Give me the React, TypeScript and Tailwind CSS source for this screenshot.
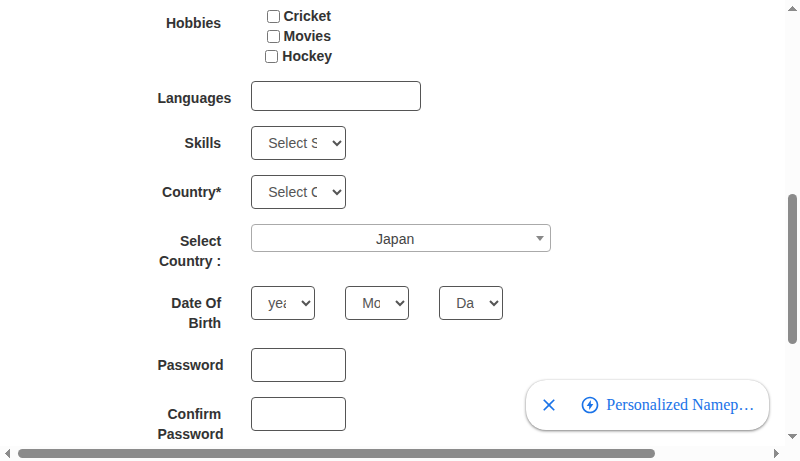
import React from "react";

const control = "h-[34px] rounded-[4px] border border-[#555] bg-white text-[14px] text-[#555]";

function Row({ label, children }: { label: string; children: React.ReactNode }) {
  return (
    <div className="mb-[15px] flex items-start">
      <label className="w-[63.75px] pt-[7px] text-right font-bold">{label}</label>
      <div className="ml-[30px] flex gap-[30px]">{children}</div>
    </div>
  );
}

function Select({ text, width }: { text: string; width: string }) {
  return (
    <select className={`${control} ${width} px-[12px] py-[6px]`} defaultValue={text}>
      <option>{text}</option>
    </select>
  );
}

function Hobby({ name }: { name: string }) {
  return (
    <label className="block h-[20px] whitespace-nowrap font-bold">
      <input type="checkbox" className="m-0 h-[13px] w-[13px] align-[-2px]" /> {name}
    </label>
  );
}

export default function App() {
  return (
    <div className="relative grid h-[461px] w-[800px] grid-cols-[785px_15px] grid-rows-[446px_15px] overflow-hidden bg-white font-['Liberation_Sans',Arial,sans-serif] text-[14px] leading-[20px] text-[#333]">
      <main className="overflow-hidden pl-[157.4px] pt-[6px]">
        <Row label="Hobbies">
          <div className="w-[95.25px] text-center">
            <Hobby name="Cricket" />
            <Hobby name="Movies" />
            <Hobby name="Hockey" />
          </div>
        </Row>
        <Row label="Languages">
          <div className="h-[30px] w-[170px] rounded-[4px] border border-[#555]" />
        </Row>
        <Row label="Skills">
          <Select text="Select Skills" width="w-[95px]" />
        </Row>
        <Row label="Country*">
          <Select text="Select Country" width="w-[95px]" />
        </Row>
        <Row label="Select Country :">
          <div className="flex h-[28px] w-[300px] items-center rounded-[4px] border border-[#aaa] pl-[8px] pr-[6px] text-[#444]">
            <span className="flex-1 pr-[6px] pt-px text-center">Japan</span>
            <span className="h-0 w-0 border-x-4 border-t-[5px] border-x-transparent border-t-[#888]" />
          </div>
        </Row>
        <Row label="Date Of Birth">
          <Select text="year" width="w-[64px]" />
          <Select text="Month" width="w-[64px]" />
          <Select text="Day" width="w-[64px]" />
        </Row>
        <Row label="Password">
          <input type="password" className={`${control} w-[95px] px-[12px]`} />
        </Row>
        <Row label="Confirm Password">
          <input type="password" className={`${control} w-[95px] px-[12px]`} />
        </Row>
      </main>

      <div className="flex flex-col items-center bg-[#fcfcfc]">
        <svg className="mt-[6px] h-[5px] w-[9px]" viewBox="0 0 9 5" fill="#8b8b8b" shapeRendering="crispEdges">
          <path d="M4.5 0 9 5H0z" />
        </svg>
        <div className="mt-[183px] h-[150px] w-[9px] rounded-full bg-[#8b8b8b]" />
        <svg className="mt-[90px] h-[5px] w-[9px]" viewBox="0 0 9 5" fill="#8b8b8b" shapeRendering="crispEdges">
          <path d="M0 0H9L4.5 5z" />
        </svg>
      </div>
      <div className="flex items-center bg-[#fcfcfc]">
        <svg className="ml-[5px] h-[9px] w-[5px]" viewBox="0 0 5 9" fill="#8b8b8b" shapeRendering="crispEdges">
          <path d="M5 0V9L0 4.5z" />
        </svg>
        <div className="ml-[8px] h-[9px] w-[637px] rounded-full bg-[#8b8b8b]" />
        <svg className="ml-[119px] h-[9px] w-[5px]" viewBox="0 0 5 9" fill="#8b8b8b" shapeRendering="crispEdges">
          <path d="M0 0V9L5 4.5z" />
        </svg>
      </div>
      <div className="bg-[#fcfcfc]" />

      <div className="absolute left-[526px] top-[380px] flex h-[50px] w-[243px] items-center rounded-[20px] bg-white text-[#1a73e8] shadow-[0_1px_3px_rgba(0,0,0,0.5),0_0_1px_rgba(0,0,0,0.15)]">
        <svg className="ml-[13px] h-[20px] w-[20px]" viewBox="0 0 24 24" fill="currentColor">
          <path d="M19 6.41 17.59 5 12 10.59 6.41 5 5 6.41 10.59 12 5 17.59 6.41 19 12 13.41 17.59 19 19 17.59 13.41 12z" />
        </svg>
        <svg className="ml-[21px] h-[20px] w-[20px]" viewBox="0 0 24 24" fill="currentColor">
          <path d="M12 2C6.48 2 2 6.48 2 12s4.48 10 10 10 10-4.48 10-10S17.52 2 12 2zm0 18c-4.42 0-8-3.58-8-8s3.58-8 8-8 8 3.58 8 8-3.58 8-8 8zm-1-2V13.2H8L13 6v4.8h3z" />
        </svg>
        <span className="ml-[6.3px] whitespace-nowrap font-['Liberation_Serif',serif] text-[16px]">Personalized Namep…</span>
      </div>
    </div>
  );
}
